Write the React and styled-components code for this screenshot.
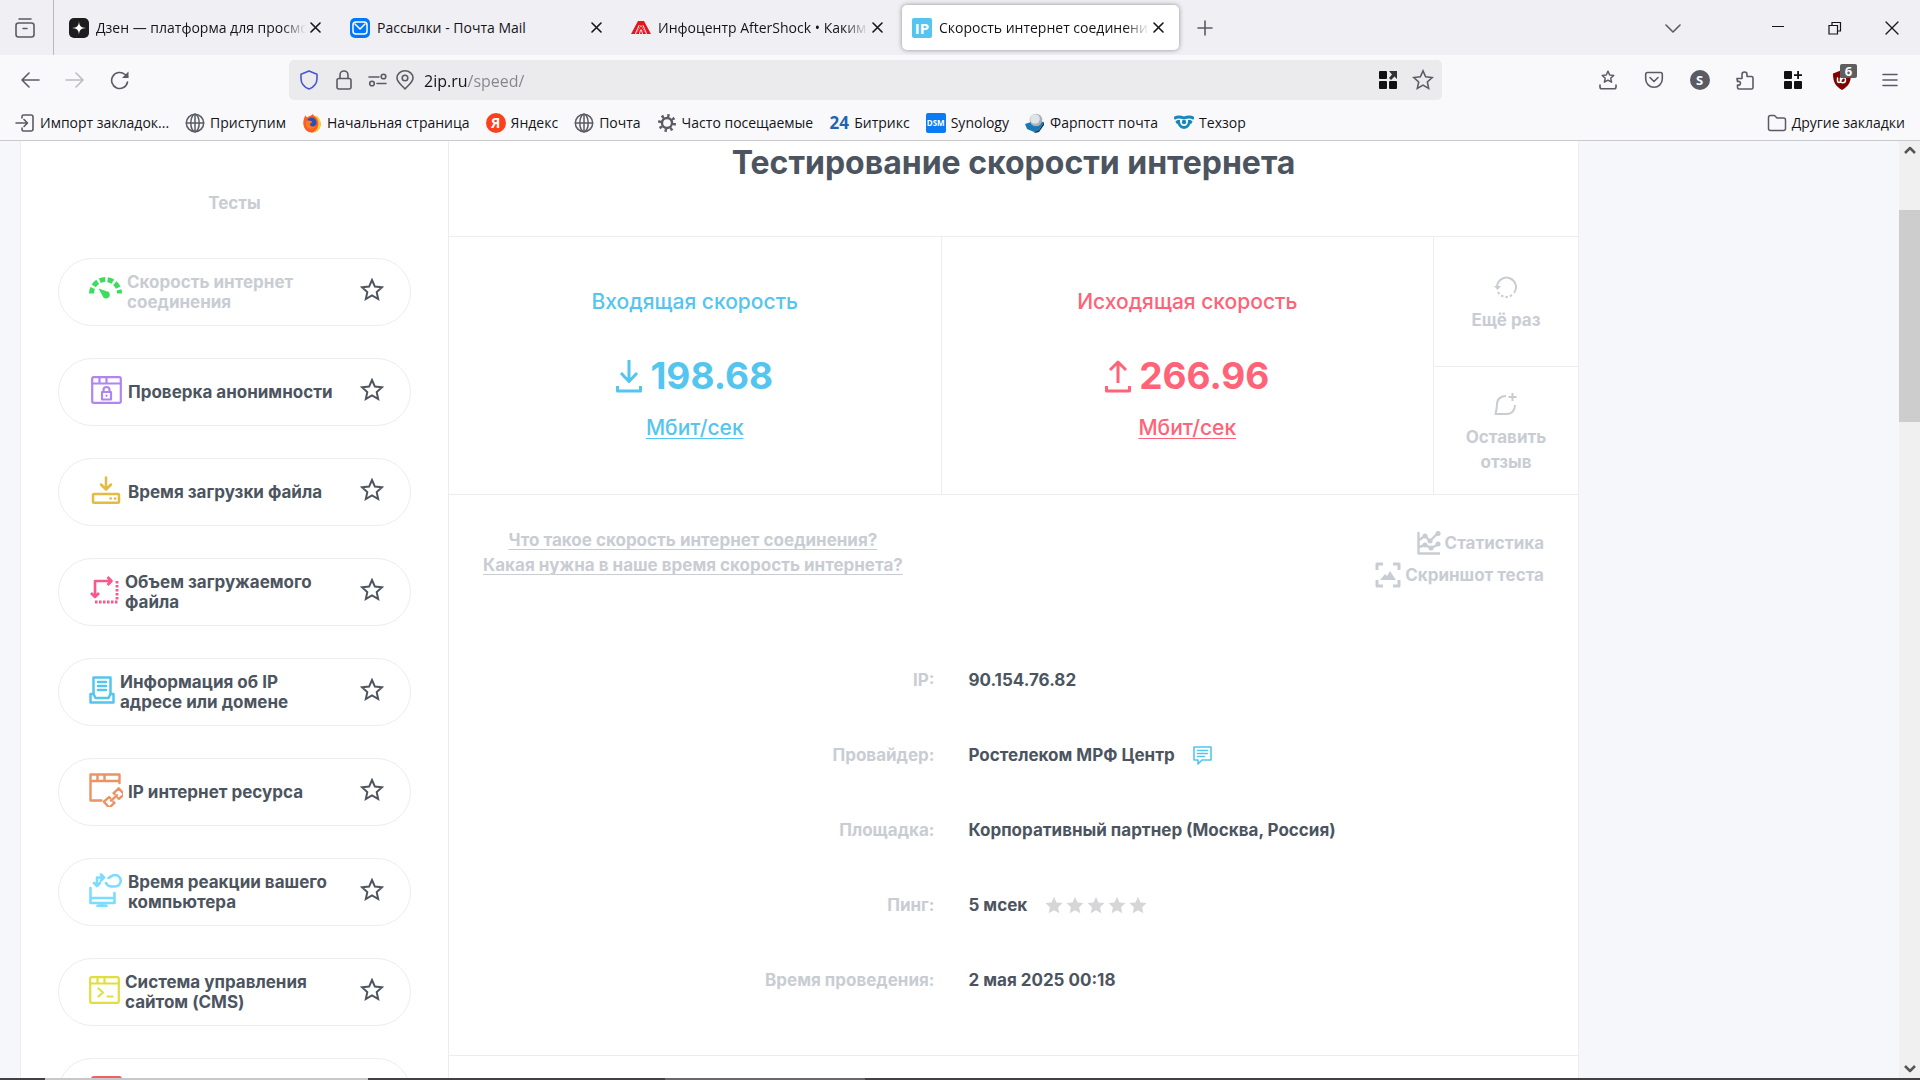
import React from "react";
import styled, { createGlobalStyle } from "styled-components";

const UI_FONT = '"Open Sans", "Noto Sans", sans-serif';
const PAGE_FONT = 'Inter, "Open Sans", sans-serif';
const INK = "#4c555f";
const MUTED = "#c9cdd3";
const LINE = "#ededee";
const BLUE = "#54c5ee";
const PINK = "#ff6378";
const CHROME = "#5b5b66";

const GlobalStyle = createGlobalStyle`
  * { box-sizing: border-box; }
  body { margin: 0; overflow: hidden; }
  button { border: 0; padding: 0; background: none; font: inherit; color: inherit; cursor: pointer; }
  svg { display: block; flex: none; }
`;

const Window = styled.div`
  display: flex;
  flex-direction: column;
  height: 100vh;
  background: #f5f7fa;
  font-family: ${UI_FONT};
`;

/* ---------- tab strip ---------- */
const TabStrip = styled.header`
  display: flex;
  align-items: center;
  flex: none;
  height: 55px;
  background: #f0eff4;
  color: #15141a;
`;
const TabsOverview = styled.button`
  display: grid;
  place-items: center start;
  width: 54px;
  height: 55px;
  padding-left: 14px;
  margin-right: 5px;
  border-right: 1px solid #b9b9bf;
`;
const Tab = styled.div`
  display: flex;
  align-items: center;
  width: 277px;
  height: 45px;
  margin-right: 4px;
  padding: 0 12px 0 10px;
  border-radius: 5px;
  background: ${(p) => (p.$active ? "#fff" : "transparent")};
  box-shadow: ${(p) => (p.$active ? "0 0 5px rgba(0, 0, 0, 0.4)" : "none")};
`;
const TabTitle = styled.button`
  display: flex;
  align-items: center;
  gap: 7px;
  flex: 1;
  min-width: 0;
  font-size: 14px;
  line-height: 20px;
`;
const TabText = styled.span`
  flex: 1;
  overflow: hidden;
  text-align: left;
  white-space: nowrap;
  mask-image: ${(p) => (p.$fade ? "linear-gradient(to left, transparent, #000 24px)" : "none")};
`;
const IconButton = styled.button`
  display: grid;
  place-items: center;
  flex: none;
  width: ${(p) => p.$w || 20}px;
  height: 40px;
  color: ${(p) => p.$color || CHROME};
`;
const StripEnd = styled.div`
  display: flex;
  align-items: center;
  margin-left: auto;
`;

/* ---------- navigation ---------- */
const NavBar = styled.nav`
  display: flex;
  align-items: center;
  flex: none;
  height: 50px;
  background: #f9f9fb;
`;
const NavGroup = styled.div`
  display: flex;
  width: 289px;
  padding-left: 7px;
`;
const UrlBar = styled.div`
  display: flex;
  align-items: center;
  flex: 1;
  height: 40px;
  padding: 0 2px;
  border-radius: 5px;
  background: #ebebed;
`;
const UrlInput = styled.input`
  flex: 1;
  min-width: 0;
  margin-left: 9px;
  padding: 2px 0 0;
  border: 0;
  outline: 0;
  font-family: ${UI_FONT};
  font-size: 16px;
  line-height: 24px;
  color: #15141a;
  background: linear-gradient(to right, #15141a 44px, #85858b 44px);
  background-clip: text;
  -webkit-text-fill-color: transparent;
`;
const Extensions = styled.div`
  display: flex;
  width: 478px;
  padding-right: 7px;
  justify-content: flex-end;
`;
const Badged = styled.span`
  position: relative;
`;
const Badge = styled.span`
  position: absolute;
  left: 8px;
  top: -6px;
  width: 17px;
  height: 14px;
  border-radius: 2px;
  background: #5e5e5e;
  color: #fff;
  font-size: 13px;
  font-weight: 700;
  line-height: 14px;
  text-align: center;
`;

/* ---------- bookmarks ---------- */
const Bookmarks = styled.nav`
  display: flex;
  align-items: center;
  gap: 16px;
  flex: none;
  height: 36px;
  padding: 1px 15px 0;
  border-bottom: 1px solid #cacacc;
  background: #f9f9fb;
`;
const Bookmark = styled.a`
  display: flex;
  align-items: center;
  gap: 5px;
  margin-left: ${(p) => (p.$last ? "auto" : "0")};
  color: #15141a;
  font-size: 14px;
  line-height: 20px;
  text-decoration: none;
  white-space: nowrap;
`;
const Favicon = styled.span`
  display: grid;
  place-items: center;
  flex: none;
  width: 20px;
  height: 20px;
  border-radius: ${(p) => p.$radius || 0}px;
  background: ${(p) => p.$bg || "transparent"};
  color: ${(p) => p.$color || "#fff"};
  font-size: ${(p) => p.$size || 14}px;
  font-weight: 700;
  line-height: 20px;
`;

/* ---------- page ---------- */
const Viewport = styled.div`
  display: flex;
  flex: 1;
  min-height: 0;
`;
const Site = styled.div`
  display: flex;
  flex: 1;
  min-width: 0;
  margin: 0 320px 0 20px;
  overflow: hidden;
  border: solid ${LINE};
  border-width: 0 1px;
  background: #fff;
  color: ${INK};
  font-family: ${PAGE_FONT};
  font-size: 17px;
  font-weight: 700;
  line-height: 20px;
`;
const Sidebar = styled.aside`
  flex: none;
  width: 428px;
  padding: 52px 37px 0;
  border-right: 1px solid ${LINE};
`;
const SidebarTitle = styled.h2`
  margin: 0 0 45px;
  color: ${MUTED};
  font-size: 17px;
  line-height: 20px;
  text-align: center;
`;
const TestList = styled.ul`
  display: flex;
  flex-direction: column;
  gap: 32px;
  margin: 0;
  padding: 0;
  list-style: none;
`;
const TestItem = styled.li`
  display: flex;
  align-items: center;
  height: 68px;
  padding: 0 26px 0 30px;
  border: 1px solid ${LINE};
  border-radius: 34px;
`;
const TestLink = styled.a`
  display: flex;
  align-items: center;
  gap: 5px;
  flex: 1;
  color: ${(p) => (p.$current ? MUTED : INK)};
  text-decoration: none;
  white-space: pre;
`;
const TestIcon = styled.span`
  padding-bottom: 4px;
`;
const FavButton = styled.button`
  padding-bottom: 4px;
`;
const Main = styled.main`
  flex: 1;
  min-width: 0;
`;
const Title = styled.h1`
  margin: 0;
  padding: 2px 0 53px;
  border-bottom: 1px solid ${LINE};
  font-size: 32px;
  line-height: 40px;
  text-align: center;
`;
const Results = styled.section`
  display: grid;
  grid-template-columns: 1fr 1fr 144px;
  border-bottom: 1px solid ${LINE};
`;
const Speed = styled.div`
  display: flex;
  flex-direction: column;
  align-items: center;
  height: 257px;
  padding-top: 53px;
  border-right: 1px solid ${LINE};
  color: ${(p) => p.$color};
  font-size: 21px;
  font-weight: 500;
  line-height: 24px;
`;
const SpeedValue = styled.div`
  display: flex;
  align-items: center;
  gap: 8px;
  margin: 37px 0 15px;
  font-size: 37px;
  font-weight: 700;
  line-height: 50px;
`;
const SpeedUnit = styled.button`
  text-decoration: underline;
  text-decoration-thickness: 1px;
  text-underline-offset: 3px;
`;
const Actions = styled.div`
  display: grid;
  grid-template-rows: 130px 1fr;
`;
const Action = styled.button`
  display: flex;
  flex-direction: column;
  align-items: center;
  gap: 9px;
  padding: ${(p) => p.$top}px 20px 0;
  border-bottom: ${(p) => (p.$divided ? `1px solid ${LINE}` : "0")};
  color: ${MUTED};
  line-height: 25px;
`;
const MoreRow = styled.section`
  display: flex;
  justify-content: space-between;
  padding: 33px 34px 0;
`;
const Questions = styled.div`
  display: flex;
  flex-direction: column;
  align-items: center;
  line-height: 25px;
`;
const MutedLink = styled.a`
  display: flex;
  align-items: center;
  gap: ${(p) => p.$gap || 0}px;
  color: ${MUTED};
  text-decoration: ${(p) => (p.$gap ? "none" : "underline")};
  text-decoration-thickness: 1px;
  text-underline-offset: 3px;
`;
const Tools = styled.div`
  display: flex;
  flex-direction: column;
  align-items: flex-end;
  gap: 7px;
  padding-top: 3px;
`;
const Details = styled.dl`
  margin: 0;
  padding: 54px 0 38px;
  border-bottom: 1px solid ${LINE};
`;
const Detail = styled.div`
  display: grid;
  grid-template-columns: 43% 1fr;
  column-gap: 34px;
  align-items: center;
  height: 75px;
`;
const Term = styled.dt`
  color: ${MUTED};
  text-align: right;
`;
const Value = styled.dd`
  display: flex;
  align-items: center;
  gap: 18px;
  margin: 0;
`;
const Rating = styled.span`
  display: flex;
  gap: 3px;
`;

/* ---------- scrollbar and task bar ---------- */
const ScrollTrack = styled.div`
  display: flex;
  flex-direction: column;
  align-items: center;
  flex: none;
  width: 21px;
  background: #f0f0f0;
  color: #555;
`;
const ScrollStep = styled.button`
  display: grid;
  place-items: center;
  width: 21px;
  height: 18px;
`;
const ScrollThumb = styled.div`
  width: 21px;
  height: 212px;
  margin: 51px 0 auto;
  background: #cdcdcd;
`;
const TaskBar = styled.footer`
  display: grid;
  grid-template-columns: 45px 323px 297px 200px 1fr;
  flex: none;
  height: 2px;
  background: #434144;
`;
const TaskSlot = styled.span`
  background: ${(p) => p.$color};
`;

/* ---------- icons ---------- */
const Svg = ({ s = 20, w, h, vb, sw = 1.6, children, ...rest }) => (
  <svg
    width={w || s}
    height={h || s}
    viewBox={vb || `0 0 ${w || s} ${h || s}`}
    fill="none"
    stroke="currentColor"
    strokeWidth={sw}
    strokeLinecap="round"
    strokeLinejoin="round"
    aria-hidden="true"
    {...rest}
  >
    {children}
  </svg>
);

const CloseX = ({ s = 11, sw = 1.6 }) => (
  <Svg s={s} sw={sw}><path d={`M1 1L${s - 1} ${s - 1}M${s - 1} 1L1 ${s - 1}`} /></Svg>
);
const Globe = () => (
  <Svg color={CHROME} sw={1.5}>
    <circle cx="10" cy="10" r="8.7" />
    <ellipse cx="10" cy="10" rx="4.2" ry="8.7" />
    <path d="M1.5 10h17M10 1.3v17.4" />
  </Svg>
);
const STAR = "M12 2l2.9 6.6 7.1.7-5.3 4.8 1.5 7L12 17.5 5.8 21.1l1.5-7L2 9.300l7.1-.7z";
const StarOutline = ({ s = 24, sw = 2 }) => (
  <Svg s={s} vb="0 0 24 24" sw={sw} strokeLinejoin="miter"><path d={STAR} /></Svg>
);
const RateStar = () => (
  <Svg s={18} vb="2 1 20 21" fill="#d6d6d8" stroke="none"><path d={STAR} /></Svg>
);

const Gauge = () => (
  <Svg w={33} h={28} vb="0 -1 33 28" color="#3ddc5f" strokeLinecap="butt">
    <path d="M2.5 16.5A14 14 0 0 1 30.500 16.5" strokeWidth="5" strokeDasharray="5.6 2.4" />
    <path d="M9.5 11.5l8 2.7a3.7 3.7 0 1 1-4 4.6z" fill="currentColor" stroke="none" />
  </Svg>
);
const BrowserFrame = ({ children, color, wide }) => (
  <Svg w={wide ? 34 : 31} h={28} vb={wide ? "-2 0 34 28" : "0 0 31 28"} color={color} sw={2.2}>
    <rect x="1.2" y="1.2" width="28.6" height="25.6" rx="1.5" />
    <path d="M1 7.5h29M8.500 1v6M15.500 1v6" />
    {children}
  </Svg>
);
const Anonymous = () => (
  <BrowserFrame color="#b085f0" wide>
    <path d="M11 16h9v7.500h-9zM12.500 16v-2a3 3 0 0 1 6 0v2M15.500 19.500v.3" />
  </BrowserFrame>
);
const Loading = () => (
  <Svg w={34} h={28} vb="-1 0 34 28" color="#e3bb40" sw={2.5}>
    <rect x="3" y="18" width="26" height="8.700" rx="1" />
    <path d="M16 1.500v11M11 8.500l5 5 5-5M20.500 22.500h.3M25 22.500h.3" />
  </Svg>
);
const Volume = () => (
  <Svg w={31} h={28} vb="-1 0 31 28" color="#f9578c" sw={2.600} strokeLinecap="butt">
    <path d="M5 20V5h16M1 17l4 4 4-4M17.500 1l4 4-4 4" />
    <path d="M27 5v20M5 26h23.300" strokeWidth="2.800" strokeDasharray="2.500 1.500" />
  </Svg>
);
const IpInfo = () => (
  <Svg w={26} h={28} color={BLUE} sw={2.500}>
    <path d="M4.500 18V1.500h17V18M9 6h8M9 10h8M9 14h8" />
    <path d="M4.500 18H1.500v8.500h23V18h-3l-2 4h-13z" />
  </Svg>
);
const Resource = () => (
  <Svg w={34} h={34} color="#ea9465" sw={2.400}>
    <path d="M12.500 27.500H1.500V1.500h29V10M1.500 8h29M8.500 1.500V8M15.500 1.500V8" />
    <g transform="rotate(-42 25 25)">
      <path d="M22 22.500V21h-7v8h7v-1.500M28 22.500V21h7v8h-7v-1.500M21 25h8" />
    </g>
  </Svg>
);
const Reaction = () => (
  <Svg w={34} h={34} color="#7bdcff" sw={2.600}>
    <path d="M1.500 15v15h24V20M1.500 25h24M13 30v2.500M8.500 32.700h9" />
    <path d="M8 12V4.500h5M5 10l3 3 3-3M12 1.500l3 3-3 3" />
    <path d="M17 10a6 6 0 0 0 5 3.500h4a5.600 5.600 0 0 0 0-11.500c-3 0-4.500 2-6.500 3" />
  </Svg>
);
const Cms = () => (
  <BrowserFrame color="#dfdf3d"><path d="M9.500 12.500l4.500 4-4.500 4M18.500 20.500h5" /></BrowserFrame>
);
const LastTest = () => <BrowserFrame color="#ef6262" wide />;

const Transfer = ({ up }) => (
  <Svg w={26} h={34} sw={3} strokeLinecap="butt">
    <path d={up ? "M13 24V3M5 11l8-8 8 8" : "M13 1v21M5 14l8 8.500L21 14"} />
    <path d="M1.5 27v5h23v-5" />
  </Svg>
);

const tabs = [
  {
    title: "Дзен — платформа для просмо",
    fade: true,
    icon: (
      <Favicon $bg="#1d1d1f" $radius={5}>
        <Svg s={14} fill="#fff" stroke="none"><path d="M7 0c.2 5 2 6.800 7 7-5 .2-6.800 2-7 7-.2-5-2-6.800-7-7 5-.2 6.800-2 7-7z" /></Svg>
      </Favicon>
    ),
  },
  {
    title: "Рассылки - Почта Mail",
    icon: (
      <Favicon $bg="#0077ff" $radius={5}>
        <Svg s={16} sw={1.5}><rect x="1" y="2" width="14" height="12" rx="3" /><path d="M3 4l5 5 5-5" /></Svg>
      </Favicon>
    ),
  },
  {
    title: "Инфоцентр AfterShock • Каким",
    fade: true,
    icon: (
      <Favicon>
        <Svg s={20} stroke="none">
          <path d="M7 3h6l7 13h-5l-5-9-5 9H0z" fill="#e8141c" />
          <path d="M10 8l5 8H5z" fill="#e8141c" />
          <path d="M8 7.500L4.500 15.500M12 7.500l3.500 8M8.500 16l1-4M11.500 16l-1-4" stroke="#f3e9ee" strokeWidth="1" />
        </Svg>
      </Favicon>
    ),
  },
  {
    title: "Скорость интернет соединени",
    fade: true,
    active: true,
    icon: <Favicon $bg={BLUE} $radius={2} $size={15}>IP</Favicon>,
  },
];

const bookmarks = [
  ["Импорт закладок...", <Svg color={CHROME}><path d="M7 5V3.500C7 2.500 7.500 2 8.500 2H16c1 0 2 .8 2 2v12c0 1.200-1 2-2 2H8.500C7.500 18 7 17.500 7 16.500V15M1 10h11M9 6.500l3.500 3.500L9 13.500" /></Svg>],
  ["Приступим", <Globe />],
  ["Начальная страница", (
    <Svg stroke="none">
      <circle cx="10" cy="11" r="8.500" fill="#ff9a1f" />
      <path d="M1.500 11C1 6 3 3 4 2.500c0 1.500 1 2 2 2.500L11 1c0 3 7 5 7.500 9.500.5 5-4 9-8.500 9S2 16 1.500 11z" fill="#ff5a2a" />
      <path d="M14 2c4 3 6 8 4 12.500-1 2.500-4 5-8 5 5-2 7-6 6-11z" fill="#ffcf34" />
      <circle cx="9.500" cy="9.500" r="5" fill="#2b4fb8" />
      <path d="M4 8c2-1.500 4 0 6 .5 1 1-2 1.500-2 3 0 2 4 3 6 1-1 4-8 5-10 0z" fill="#ff7a1f" />
    </Svg>
  )],
  ["Яндекс", <Favicon $bg="#fc3f1d" $radius={10}>Я</Favicon>],
  ["Почта", <Globe />],
  ["Часто посещаемые", (
    <Svg color={CHROME} strokeLinecap="butt">
      <circle cx="10" cy="10" r="5" strokeWidth="2.400" />
      <circle cx="10" cy="10" r="7.500" strokeWidth="3" strokeDasharray="2.400 3.490" />
    </Svg>
  )],
  ["Битрикс", <Favicon $color="#2166ad" $size={17}>24</Favicon>],
  ["Synology", <Favicon $bg="#0a7bf2" $radius={2} $size={8}>DSM</Favicon>],
  ["Фарпостт почта", (
    <Svg stroke="none">
      <path d="M0 11l9-3 10 1-5 8-5 2-7-3z" fill="#1878b8" />
      <path d="M9 19l5-2 5-8v3l-5 7-4 1z" fill="#0c3552" />
      <circle cx="11" cy="7" r="6.300" fill="#a9b2b8" />
      <circle cx="10" cy="6" r="4.800" fill="#dfe4e7" />
    </Svg>
  )],
  ["Техзор", (
    <Svg color="#1787b8" sw={2.800} strokeLinecap="butt">
      <path d="M0 5.500c3-2 6-2 10-.5 4-1.500 7-1.500 10 .5M2 9.500L5 8M18 9.500L15 8M4.500 7c0 5 2.500 7.500 5.500 7.500s5.500-2.500 5.500-7.500" />
      <circle cx="10" cy="9" r="2.200" fill="currentColor" stroke="none" />
    </Svg>
  )],
];

const tests = [
  ["Скорость интернет\nсоединения", Gauge, true],
  ["Проверка анонимности", Anonymous],
  ["Время загрузки файла", Loading],
  ["Объем загружаемого\nфайла", Volume],
  ["Информация об IP\nадресе или домене", IpInfo],
  ["IP интернет ресурса", Resource],
  ["Время реакции вашего\nкомпьютера", Reaction],
  ["Система управления\nсайтом (CMS)", Cms],
  ["", LastTest],
];

const details = [
  ["IP:", "90.154.76.82"],
  ["Провайдер:", "Ростелеком МРФ Центр", (
    <Svg w={19} h={20} color={BLUE}>
      <path d="M1 2h17v13H9l-4 4v-4H1zM4.500 5.500h10M4.500 8.500h10M4.500 11.500h7" />
    </Svg>
  )],
  ["Площадка:", "Корпоративный партнер (Москва, Россия)"],
  ["Пинг:", "5 мсек", <Rating>{[1, 2, 3, 4, 5].map((n) => <RateStar key={n} />)}</Rating>],
  ["Время проведения:", "2 мая 2025 00:18"],
];

const Tiles = ({ children }) => (
  <Svg s={18} stroke="none" fill="#111">
    <rect x="0" y="0" width="8" height="8" rx="1" />
    <rect x="0" y="10" width="8" height="8" rx="1" />
    <rect x="10" y="10" width="8" height="8" rx="1" />
    {children}
  </Svg>
);

export default function App() {
  return (
    <Window>
      <GlobalStyle />
      <TabStrip>
        <TabsOverview aria-label="Обзор вкладок">
          <Svg s={22} color={CHROME}><rect x="2" y="6" width="18" height="14" rx="2.500" /><path d="M5 2h12M9 11.500h4" /></Svg>
        </TabsOverview>
        {tabs.map((t) => (
          <Tab key={t.title} $active={t.active}>
            <TabTitle>{t.icon}<TabText $fade={t.fade}>{t.title}</TabText></TabTitle>
            <IconButton $w={18} $color="#15141a" aria-label="Закрыть вкладку"><CloseX /></IconButton>
          </Tab>
        ))}
        <IconButton $w={44} aria-label="Новая вкладка"><Svg s={16}><path d="M8 1v14M1 8h14" /></Svg></IconButton>
        <StripEnd>
          <IconButton $w={114} aria-label="Список вкладок"><Svg w={54} h={16}><path d="M1 5l7 7 7-7" /></Svg></IconButton>
          <IconButton $w={57} $color="#15141a" aria-label="Свернуть"><Svg s={12} sw={1.200}><path d="M0 4.500h12" /></Svg></IconButton>
          <IconButton $w={57} $color="#15141a" aria-label="Восстановить"><Svg s={14} sw={1.200} strokeLinejoin="miter"><path d="M1 4.500h8.500V13H1zM4 4.500V1.500h8.500V10H9.500" /></Svg></IconButton>
          <IconButton $w={57} $color="#15141a" aria-label="Закрыть"><CloseX s={14} sw={1.300} /></IconButton>
        </StripEnd>
      </TabStrip>

      <NavBar>
        <NavGroup>
          <IconButton $w={45} aria-label="Назад"><Svg><path d="M19 10H2M9 3l-7 7 7 7" /></Svg></IconButton>
          <IconButton $w={45} $color="#bcbcc2" aria-label="Вперёд"><Svg><path d="M1 10h17M11 3l7 7-7 7" /></Svg></IconButton>
          <IconButton $w={45} aria-label="Обновить"><Svg><path d="M17.500 12A8 8 0 1 1 15 4.500l2.500 2.200" /><path d="M18.500 1.500v6.500h-6.500z" fill="currentColor" stroke="none" /></Svg></IconButton>
        </NavGroup>
        <UrlBar>
          <IconButton $w={35} $color="#4a55d8" aria-label="Защита"><Svg><path d="M10 1l8 3.200v4.300c0 5-3.500 8.800-8 10.500-4.500-1.700-8-5.500-8-10.500V4.200z" /></Svg></IconButton>
          <IconButton $w={35} aria-label="Соединение"><Svg><rect x="3" y="8.500" width="14" height="10.500" rx="2" /><path d="M6 8.500V5a4 4 0 0 1 8 0v3.500" /></Svg></IconButton>
          <IconButton $w={34} aria-label="Разрешения"><Svg><path d="M1 7h10M9 13.500h9" /><circle cx="15.500" cy="6.500" r="2.300" /><circle cx="4" cy="13.500" r="2.300" /></Svg></IconButton>
          <IconButton $w={20} aria-label="Местоположение"><Svg><path d="M10 19C6 14.500 2 12 2 8a8 7.200 0 0 1 16 0c0 4-4 6.500-8 11z" /><circle cx="10" cy="8" r="2.800" /></Svg></IconButton>
          <UrlInput aria-label="Адрес" defaultValue="2ip.ru/speed/" />
          <IconButton $w={35} aria-label="Группы"><Tiles><path d="M10 0h8v8l-2.500-2.500L12 9l-2-2 3-3.500z" fill="#333" /></Tiles></IconButton>
          <IconButton $w={35} aria-label="Добавить в закладки"><StarOutline s={22} sw={1.700} /></IconButton>
        </UrlBar>
        <Extensions>
          <IconButton $w={46} aria-label="Закладки"><Svg><g transform="translate(3 0) scale(.58)" strokeWidth="2.500"><path d={STAR} /></g><path d="M2 15v2c0 1 .8 1.800 1.800 1.800h12.400c1 0 1.800-.8 1.800-1.800v-2" /></Svg></IconButton>
          <IconButton $w={46} aria-label="Pocket"><Svg><path d="M3.500 2.500h13c1 0 1.800.8 1.800 1.800V9a8.300 8.300 0 0 1-16.600 0V4.300c0-1 .8-1.800 1.800-1.800zM6 7.500l4 4 4-4" /></Svg></IconButton>
          <IconButton $w={45} aria-label="Аккаунт"><Favicon $bg={CHROME} $radius={10} $size={13}>S</Favicon></IconButton>
          <IconButton $w={46} aria-label="Расширения"><Svg><path d="M2 8.500h5V4.500a2.500 2.500 0 0 1 5 0V6.500h4.500c.8 0 1.500.7 1.500 1.500v9.500c0 .8-.7 1.500-1.500 1.500H4c-1 0-1.500-.7-1.500-1.500V15c4 1 4-4.500 0-3.500z" /></Svg></IconButton>
          <IconButton $w={49} aria-label="Приложения"><Tiles><path d="M13.200 0h1.800v3.200h3V5h-3v3h-1.800V5H10V3.200h3.200z" /></Tiles></IconButton>
          <IconButton $w={50} aria-label="Блокировщик">
            <Badged>
              <Svg stroke="none"><path d="M10 0l9 3.500c0 8-2 12.500-9 16.500C3 16 1 11.500 1 3.500z" fill="#800000" /><path d="M5.500 8v3c0 2 3 2 3 0V8M8.500 11c0 2 5 3 5-1s-4-2-4 0" stroke="#fff" strokeWidth="1.500" /></Svg>
              <Badge>6</Badge>
            </Badged>
          </IconButton>
          <IconButton $w={46} aria-label="Меню"><Svg s={16}><path d="M1 2.500h14M1 8h14M1 13.500h14" /></Svg></IconButton>
        </Extensions>
      </NavBar>

      <Bookmarks>
        {bookmarks.map(([name, icon]) => (
          <Bookmark key={name} href="#">{icon}{name}</Bookmark>
        ))}
        <Bookmark href="#" $last>
          <Svg color={CHROME} sw={1.500}><path d="M1.500 4.500c0-1 .8-2 2-2h4l2.500 2.500h6.500c1.200 0 2 .8 2 2v8.500c0 1.200-.8 2-2 2h-13c-1.200 0-2-.8-2-2z" /></Svg>
          Другие закладки
        </Bookmark>
      </Bookmarks>

      <Viewport>
        <Site>
          <Sidebar>
            <SidebarTitle>Тесты</SidebarTitle>
            <TestList>
              {tests.map(([name, Icon, current]) => (
                <TestItem key={name}>
                  <TestLink href="#" $current={current}>
                    <TestIcon><Icon /></TestIcon>
                    {name}
                  </TestLink>
                  <FavButton aria-label="В избранное"><StarOutline /></FavButton>
                </TestItem>
              ))}
            </TestList>
          </Sidebar>
          <Main>
            <Title>Тестирование скорости интернета</Title>
            <Results>
              <Speed $color={BLUE}>
                <span>Входящая скорость</span>
                <SpeedValue><Transfer />198.68</SpeedValue>
                <SpeedUnit>Мбит/сек</SpeedUnit>
              </Speed>
              <Speed $color={PINK}>
                <span>Исходящая скорость</span>
                <SpeedValue><Transfer up />266.96</SpeedValue>
                <SpeedUnit>Мбит/сек</SpeedUnit>
              </Speed>
              <Actions>
                <Action $top={38} $divided>
                  <Svg s={24} sw={2}>
                    <path d="M3 12A9.500 9.500 0 1 1 20 18" strokeLinecap="butt" />
                    <path d="M18 20A9.500 9.500 0 0 1 4 17" strokeLinecap="butt" strokeDasharray="2.500 2" />
                    <path d="M0 11l3.500 4 3.500-4z" fill="currentColor" stroke="none" />
                  </Svg>
                  Ещё раз
                </Action>
                <Action $top={25}>
                  <Svg s={24} sw={2}><path d="M12 4c-5 0-9 3-9 8 0 3-.5 6-1.500 10H13c5 0 8-4 8-9M18.500 1v8M14.500 5h8" strokeLinecap="butt" /></Svg>
                  <span>Оставить отзыв</span>
                </Action>
              </Actions>
            </Results>
            <MoreRow>
              <Questions>
                <MutedLink href="#">Что такое скорость интернет соединения?</MutedLink>
                <MutedLink href="#">Какая нужна в наше время скорость интернета?</MutedLink>
              </Questions>
              <Tools>
                <MutedLink href="#" $gap={4}>
                  <Svg s={24} sw={2.400}>
                    <path d="M1.500 1v21.500H23" strokeLinecap="butt" />
                    <path d="M2 9l6-4 5 5 8-8M2 16l6-2 6 3 8-4" />
                    <path d="M8 5h.1M13 10h.1M21 2.500h.1M8 14h.1M14 17h.1M21 13h.1" strokeWidth="5" />
                  </Svg>
                  Статистика
                </MutedLink>
                <MutedLink href="#" $gap={4}>
                  <Svg s={26} sw={3} strokeLinecap="butt">
                    <path d="M2 8V2h6M18 2h6v6M24 18v6h-6M8 24H2v-6" />
                    <path d="M5 18l5-6 2 2 3-5 6 9z" fill="currentColor" stroke="none" />
                  </Svg>
                  Скриншот теста
                </MutedLink>
              </Tools>
            </MoreRow>
            <Details>
              {details.map(([term, value, extra]) => (
                <Detail key={term}>
                  <Term>{term}</Term>
                  <Value>{value}{extra}</Value>
                </Detail>
              ))}
            </Details>
          </Main>
        </Site>
        <ScrollTrack>
          <ScrollStep aria-label="Вверх"><Svg s={12} sw={2.500} strokeLinecap="butt"><path d="M1 9l5-5 5 5" /></Svg></ScrollStep>
          <ScrollThumb />
          <ScrollStep aria-label="Вниз"><Svg s={12} sw={2.500} strokeLinecap="butt"><path d="M1 3l5 5 5-5" /></Svg></ScrollStep>
        </ScrollTrack>
      </Viewport>
      <TaskBar>
        <TaskSlot />
        <TaskSlot $color="#c8c8c8" />
        <TaskSlot />
        <TaskSlot $color="#6b696c" />
        <TaskSlot />
      </TaskBar>
    </Window>
  );
}
